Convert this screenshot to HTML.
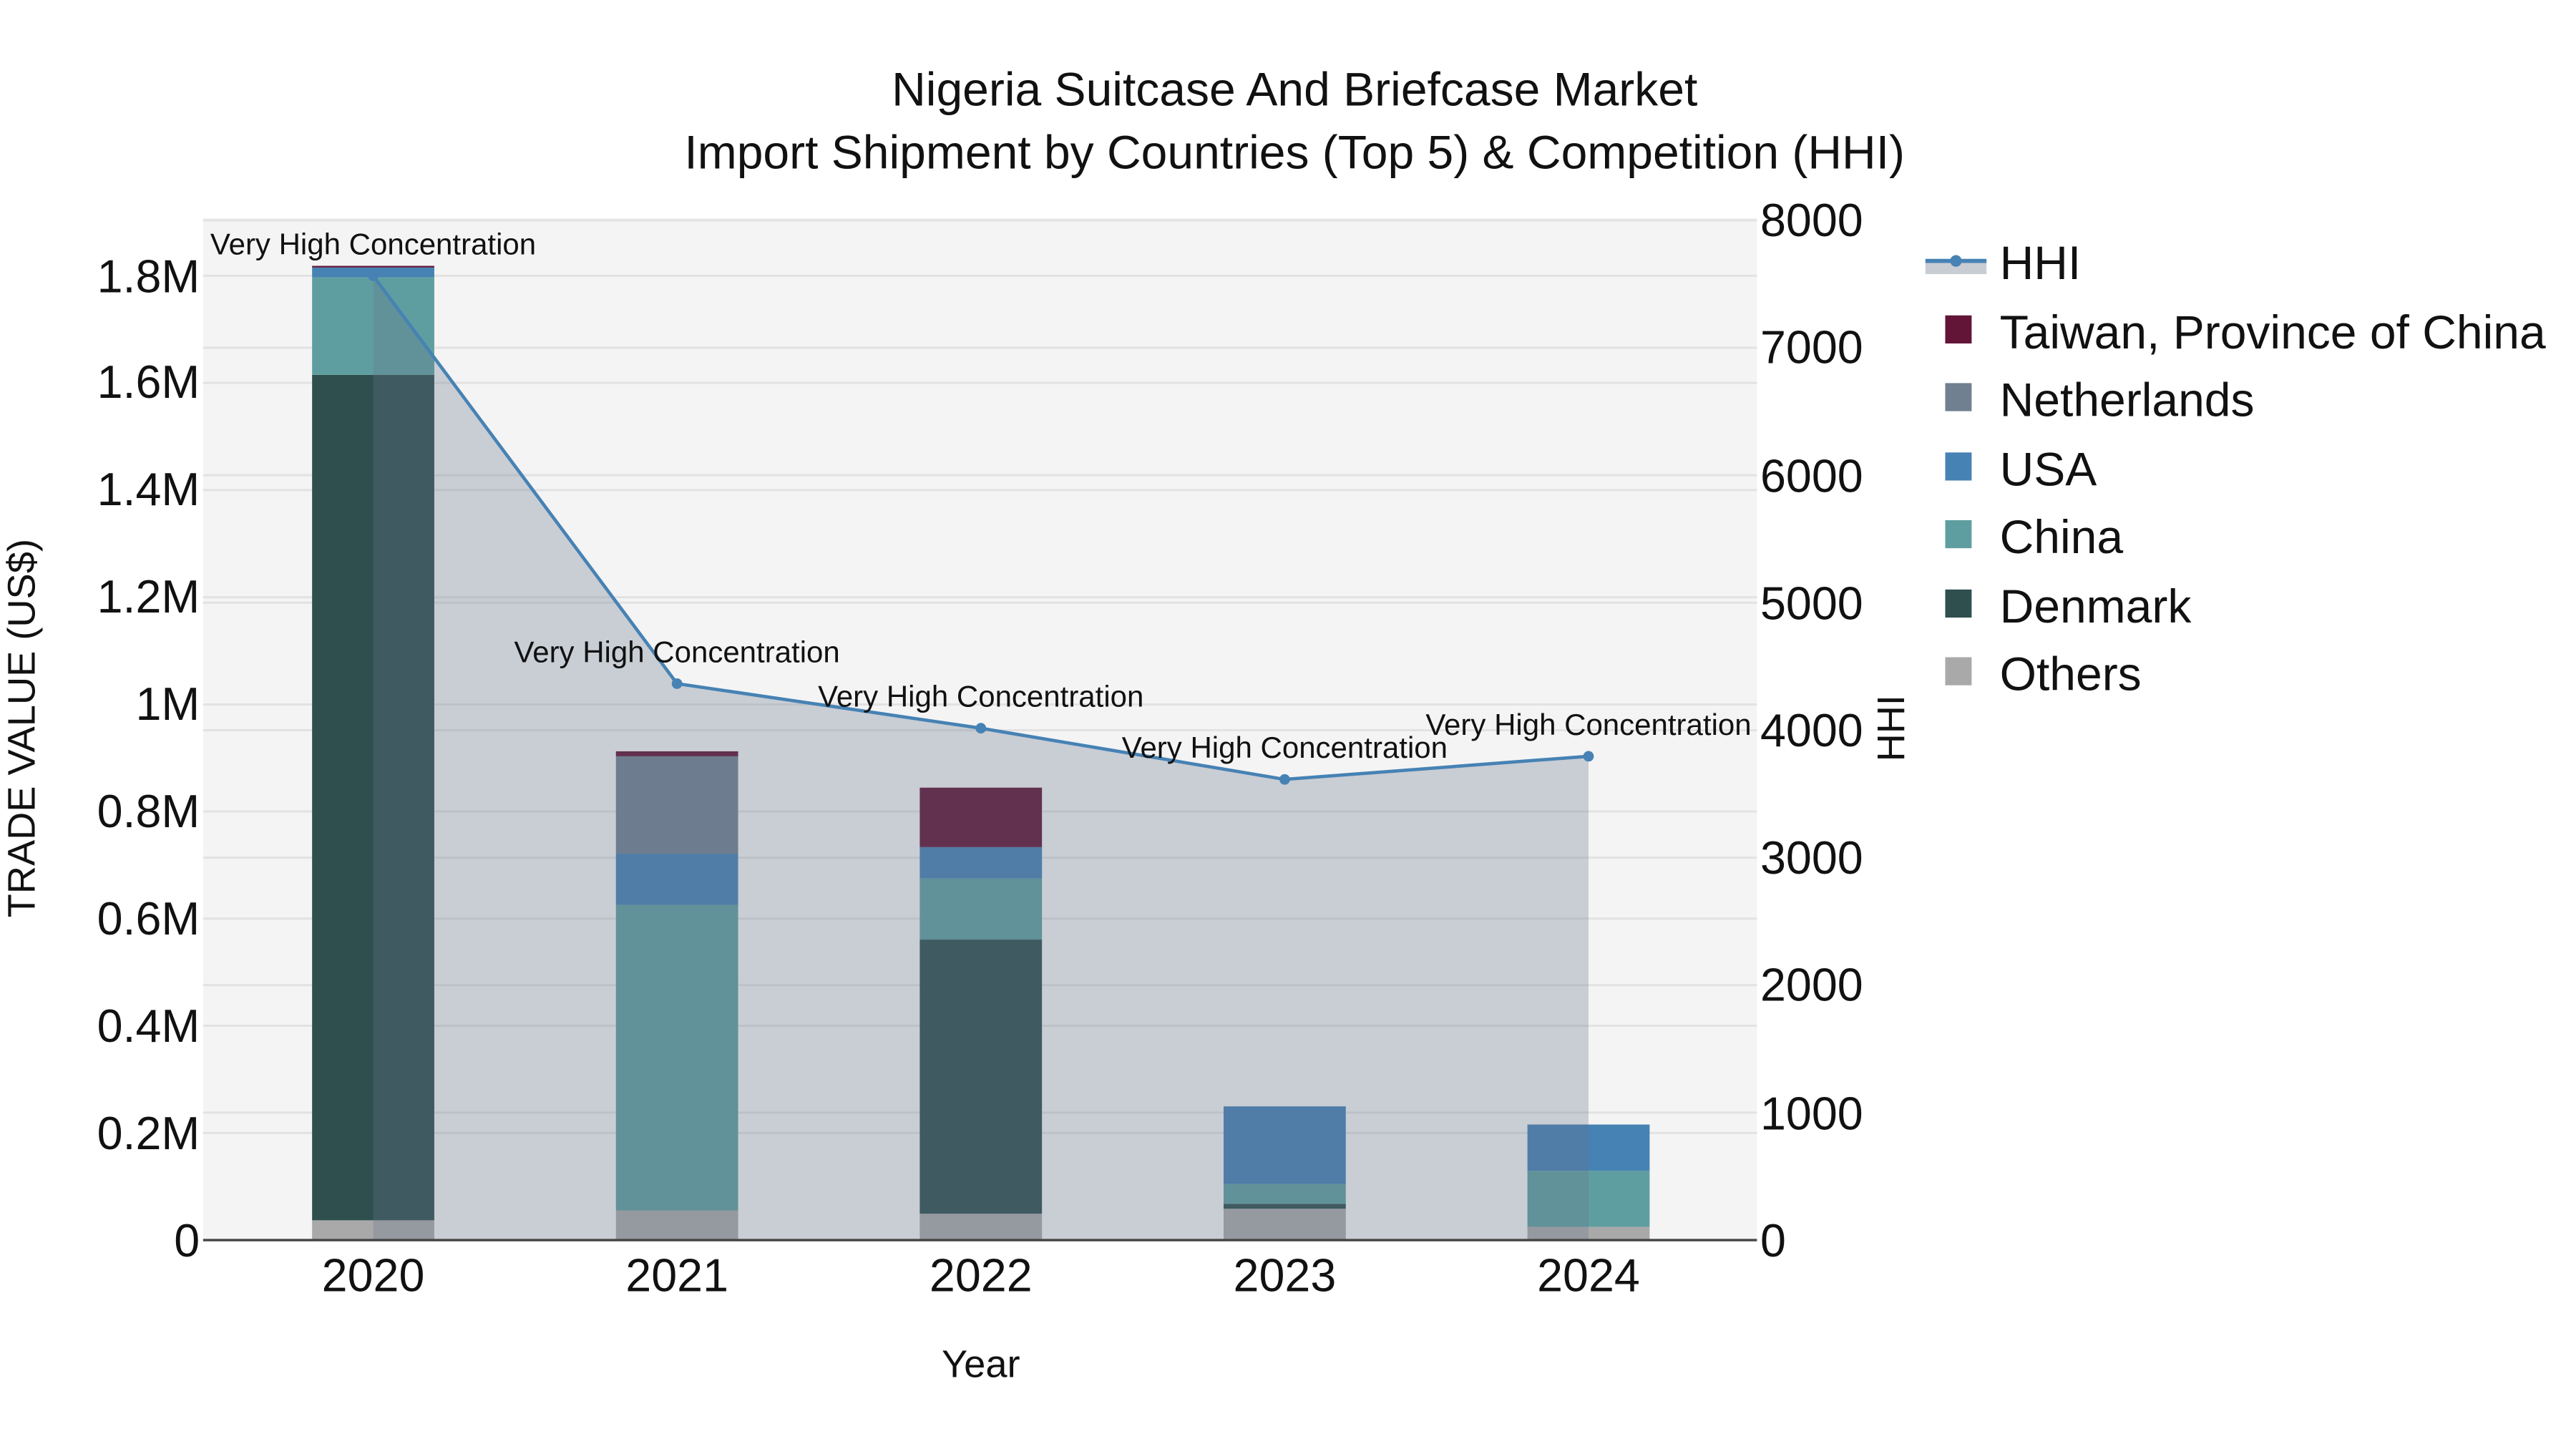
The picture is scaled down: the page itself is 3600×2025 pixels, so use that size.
<!DOCTYPE html>
<html><head><meta charset="utf-8"><style>html,body{margin:0;padding:0;background:#fff}svg{display:block}</style></head>
<body>
<svg width="3600" height="2025" viewBox="0 0 1560 877.5" xmlns="http://www.w3.org/2000/svg" font-family="Liberation Sans, Arial, sans-serif">
<rect width="1560" height="877.5" fill="#fff"/>
<rect x="123" y="132" width="941" height="619" fill="#f4f4f4"/>
<g stroke="#e2e2e2" stroke-width="1.3">
<line x1="123" x2="1064" y1="686.1" y2="686.1"/><line x1="123" x2="1064" y1="621.2" y2="621.2"/><line x1="123" x2="1064" y1="556.3" y2="556.3"/><line x1="123" x2="1064" y1="491.4" y2="491.4"/><line x1="123" x2="1064" y1="426.6" y2="426.6"/><line x1="123" x2="1064" y1="361.7" y2="361.7"/><line x1="123" x2="1064" y1="296.8" y2="296.8"/><line x1="123" x2="1064" y1="231.9" y2="231.9"/><line x1="123" x2="1064" y1="167" y2="167"/>
<line x1="123" x2="1064" y1="673.8" y2="673.8"/><line x1="123" x2="1064" y1="596.6" y2="596.6"/><line x1="123" x2="1064" y1="519.4" y2="519.4"/><line x1="123" x2="1064" y1="442.2" y2="442.2"/><line x1="123" x2="1064" y1="365" y2="365"/><line x1="123" x2="1064" y1="287.8" y2="287.8"/><line x1="123" x2="1064" y1="210.6" y2="210.6"/><line x1="123" x2="1064" y1="133.4" y2="133.4"/>
</g>
<g>
<rect x="189" y="739" width="74" height="12" fill="#a9a9a9"/>
<rect x="189" y="227" width="74" height="512" fill="#2f4f4f"/>
<rect x="189" y="168" width="74" height="59" fill="#5f9ea0"/>
<rect x="189" y="162" width="74" height="6" fill="#4682b4"/>
<rect x="189" y="161" width="74" height="1" fill="#621537"/>

<rect x="373" y="733" width="74" height="18" fill="#a9a9a9"/>
<rect x="373" y="548" width="74" height="185" fill="#5f9ea0"/>
<rect x="373" y="517" width="74" height="31" fill="#4682b4"/>
<rect x="373" y="458" width="74" height="59" fill="#708090"/>
<rect x="373" y="455" width="74" height="3" fill="#621537"/>

<rect x="557" y="735" width="74" height="16" fill="#a9a9a9"/>
<rect x="557" y="569" width="74" height="166" fill="#2f4f4f"/>
<rect x="557" y="532" width="74" height="37" fill="#5f9ea0"/>
<rect x="557" y="513" width="74" height="19" fill="#4682b4"/>
<rect x="557" y="477" width="74" height="36" fill="#621537"/>

<rect x="741" y="732" width="74" height="19" fill="#a9a9a9"/>
<rect x="741" y="729" width="74" height="3" fill="#2f4f4f"/>
<rect x="741" y="717" width="74" height="12" fill="#5f9ea0"/>
<rect x="741" y="670" width="74" height="47" fill="#4682b4"/>

<rect x="925" y="743" width="74" height="8" fill="#a9a9a9"/>
<rect x="925" y="709" width="74" height="34" fill="#5f9ea0"/>
<rect x="925" y="681" width="74" height="28" fill="#4682b4"/>
</g>
<polygon points="226,167 410,414 594,441 778,472 962,458 962,751 226,751" fill="rgb(103,115,140)" fill-opacity="0.3"/>
<line x1="123" x2="1064" y1="751" y2="751" stroke="#444" stroke-width="1.5"/>
<polyline points="226,167 410,414 594,441 778,472 962,458" fill="none" stroke="#4682b4" stroke-width="2"/>
<g fill="#4682b4"><circle cx="226" cy="167" r="3.2"/><circle cx="410" cy="414" r="3.2"/><circle cx="594" cy="441" r="3.2"/><circle cx="778" cy="472" r="3.2"/><circle cx="962" cy="458" r="3.2"/></g>
<g font-size="18.2" text-anchor="middle" fill="#111">
<text x="226" y="154">Very High Concentration</text>
<text x="410" y="401">Very High Concentration</text>
<text x="594" y="428">Very High Concentration</text>
<text x="778" y="459">Very High Concentration</text>
<text x="962" y="445">Very High Concentration</text>
</g>
<g font-size="28" text-anchor="end" fill="#111">
<text x="121" y="761">0</text><text x="121" y="696">0.2M</text><text x="121" y="631">0.4M</text><text x="121" y="566">0.6M</text><text x="121" y="501">0.8M</text><text x="121" y="436">1M</text><text x="121" y="371">1.2M</text><text x="121" y="306">1.4M</text><text x="121" y="241">1.6M</text><text x="121" y="177">1.8M</text>
</g>
<g font-size="28" fill="#111">
<text x="1066" y="761">0</text><text x="1066" y="684">1000</text><text x="1066" y="606">2000</text><text x="1066" y="529">3000</text><text x="1066" y="452">4000</text><text x="1066" y="375">5000</text><text x="1066" y="298">6000</text><text x="1066" y="220">7000</text><text x="1066" y="143">8000</text>
</g>
<g font-size="28" text-anchor="middle" fill="#111">
<text x="226" y="782">2020</text><text x="410" y="782">2021</text><text x="594" y="782">2022</text><text x="778" y="782">2023</text><text x="962" y="782">2024</text>
</g>
<text x="594" y="834" font-size="23.5" text-anchor="middle" fill="#111">Year</text>
<text transform="translate(21,441) rotate(-90)" font-size="23.5" text-anchor="middle" fill="#111">TRADE VALUE (US$)</text>
<text transform="translate(1153,441) rotate(-90)" font-size="23.5" text-anchor="middle" fill="#111">HHI</text>
<g font-size="28.6" text-anchor="middle" fill="#111">
<text x="784" y="64">Nigeria Suitcase And Briefcase Market</text>
<text x="784" y="102">Import Shipment by Countries (Top 5) &amp; Competition (HHI)</text>
</g>
<rect x="1166" y="158" width="37" height="8" fill="#c8ccd3"/>
<line x1="1166" x2="1203" y1="158" y2="158" stroke="#4682b4" stroke-width="2.5"/>
<circle cx="1184.5" cy="158" r="3.5" fill="#4682b4"/>
<g>
<rect x="1178" y="191" width="16" height="17" fill="#621537"/>
<rect x="1178" y="232" width="16" height="17" fill="#708090"/>
<rect x="1178" y="274" width="16" height="17" fill="#4682b4"/>
<rect x="1178" y="315" width="16" height="17" fill="#5f9ea0"/>
<rect x="1178" y="357" width="16" height="17" fill="#2f4f4f"/>
<rect x="1178" y="398" width="16" height="17" fill="#a9a9a9"/>
</g>
<g font-size="28.6" fill="#111">
<text x="1211" y="169">HHI</text>
<text x="1211" y="211">Taiwan, Province of China</text>
<text x="1211" y="252">Netherlands</text>
<text x="1211" y="294">USA</text>
<text x="1211" y="335">China</text>
<text x="1211" y="377">Denmark</text>
<text x="1211" y="418">Others</text>
</g>
</svg>
</body></html>
